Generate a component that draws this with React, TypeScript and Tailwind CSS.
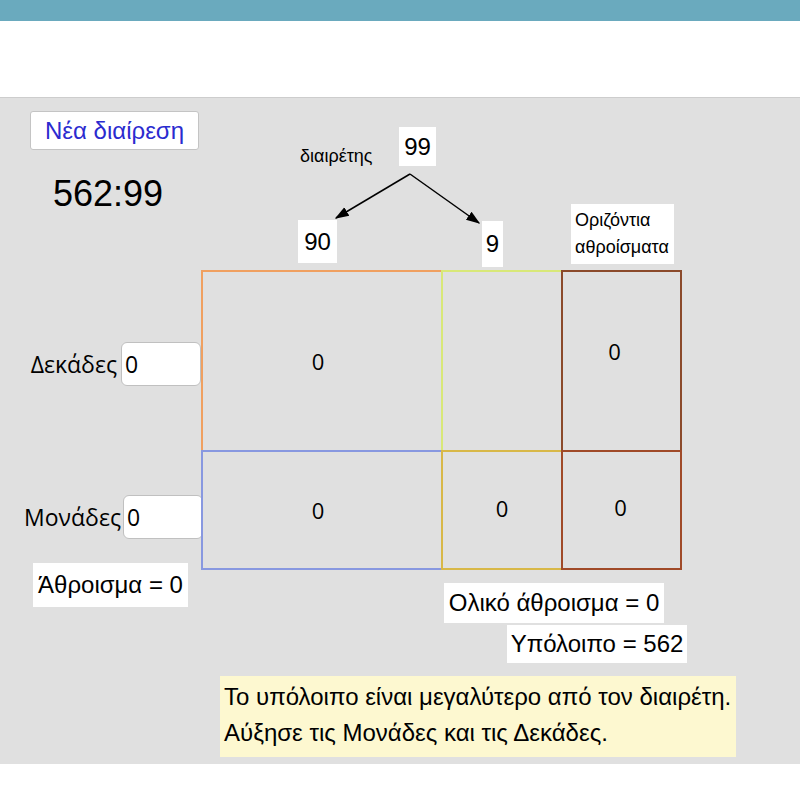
import { useState } from 'react'

const sans = "font-['Liberation_Sans',Arial,sans-serif]"
const ui = "font-['Open_Sans','Noto_Sans',sans-serif]"

function Tag({ className, children }: { className: string; children: React.ReactNode }) {
  return (
    <div className={`flex items-center justify-center bg-white text-black ${sans} ${className}`}>
      {children}
    </div>
  )
}

function Cell({ className, children }: { className: string; children?: React.ReactNode }) {
  return (
    <div className={`flex items-center justify-center text-[22px] text-black ${ui} ${className}`}>
      {children}
    </div>
  )
}

function DigitInput({ label, value, onChange, className }: {
  label: string
  value: string
  onChange: (v: string) => void
  className: string
}) {
  return (
    <div className={`flex items-center justify-end ${className}`}>
      <span className={`text-[23px] text-black ${ui}`}>{label}</span>
      <input
        value={value}
        onChange={(e) => onChange(e.target.value)}
        className={`h-[44px] w-[80px] rounded-[6px] border border-[#c0c0c0] bg-white px-[3px] text-[23px] text-black outline-none ${ui}`}
      />
    </div>
  )
}

export default function App() {
  const [tens, setTens] = useState('0')
  const [units, setUnits] = useState('0')

  return (
    <div className="flex h-[800px] w-[800px] flex-col bg-white">
      <div className="h-[21px] shrink-0 bg-[#6aaabe]" />
      <div className="h-[76px] shrink-0 bg-white" />

      {/* applet canvas */}
      <div className="flex h-[667px] shrink-0 flex-col border-t border-[#cdcdcd] bg-[#e0e0e0]">
        <div className="relative h-[172px] shrink-0">
          <div className="flex flex-col items-start pl-[30px] pt-[13px]">
            <button className={`flex h-[39px] w-[169px] items-center justify-center rounded-[3px] border border-[#c4c4c4] bg-white text-[24px] text-[#2b2bcf] ${sans}`}>
              Νέα διαίρεση
            </button>
            <div className={`ml-[23px] mt-[24px] text-[36px] leading-[40px] text-black ${sans}`}>562:99</div>
          </div>

          {/* divisor split: 99 -> 90 + 9 */}
          <div className={`absolute left-[300px] top-[48px] text-[18px] leading-[20px] text-black ${sans}`}>διαιρέτης</div>
          <Tag className="absolute left-[399px] top-[29px] h-[39px] w-[37px] text-[24px]">99</Tag>
          <Tag className="absolute left-[298px] top-[122px] h-[43px] w-[39px] text-[24px]">90</Tag>
          <Tag className="absolute left-[482px] top-[123px] h-[46px] w-[21px] text-[24px]">9</Tag>
          <Tag className="absolute left-[571px] top-[106px] h-[60px] w-[103px] flex-col !items-start px-[4px] text-[18px] leading-[27px]">
            <span>Οριζόντια</span>
            <span>αθροίσματα</span>
          </Tag>
          <svg className="pointer-events-none absolute left-0 top-0" width="800" height="172">
            <defs>
              <marker id="head" viewBox="0 0 10 10" refX="9" refY="5" markerWidth="14" markerHeight="14" orient="auto" markerUnits="userSpaceOnUse">
                <path d="M0 1.5 L10 5 L0 8.5 z" fill="#000" />
              </marker>
            </defs>
            <line x1="410" y1="76" x2="336" y2="120" stroke="#000" strokeWidth="1.5" markerEnd="url(#head)" />
            <line x1="410" y1="76" x2="479" y2="125" stroke="#000" strokeWidth="1.5" markerEnd="url(#head)" />
          </svg>
        </div>

        <div className="flex h-[313px] shrink-0 items-start">
          <div className="flex w-[201px] shrink-0 flex-col">
            <DigitInput label="Δεκάδες" value={tens} onChange={setTens} className="mt-[72px] gap-[4px]" />
            <DigitInput label="Μονάδες" value={units} onChange={setUnits} className="-mr-[2px] mt-[109px] gap-[2px]" />
            <Tag className="ml-[33px] mt-[24px] h-[44px] w-[155px] text-[24px]">Άθροισμα = 0</Tag>
          </div>

          {/* tens / units grid */}
          <div className="grid grid-cols-[240px_120px_121px] grid-rows-[180px_120px]">
            <Cell className="border-l-2 border-t-2 border-[#f0a060] pr-[8px]">0</Cell>
            <Cell className="border-l-2 border-t-2 border-[#d8e878]" />
            <Cell className="border-2 border-b-0 border-[#8b4a2b] pb-[20px] pr-[14px]">0</Cell>
            <Cell className="border-2 border-r-0 border-[#8898e0] pr-[8px]">0</Cell>
            <Cell className="border-b-2 border-l-2 border-t-2 border-[#d8b848] pb-[4px]">0</Cell>
            <Cell className="border-2 border-[#a04a28] pb-[6px] pr-[2px]">0</Cell>
          </div>
        </div>

        <div className="flex flex-col items-start">
          <Tag className="ml-[444px] h-[40px] w-[220px] text-[24px]">Ολικό άθροισμα = 0</Tag>
          <Tag className="ml-[507px] mt-[2px] h-[38px] w-[180px] text-[24px]">Υπόλοιπο = 562</Tag>
          <div className={`ml-[220px] mt-[13px] flex h-[81px] w-[516px] flex-col justify-center bg-[#fdf8d0] px-[4px] pb-[4px] text-[24px] leading-[36px] text-black ${sans}`}>
            <span>Το υπόλοιπο είναι μεγαλύτερο από τον διαιρέτη.</span>
            <span>Αύξησε τις Μονάδες και τις Δεκάδες.</span>
          </div>
        </div>
      </div>

      <div className="flex-1 bg-white" />
    </div>
  )
}
